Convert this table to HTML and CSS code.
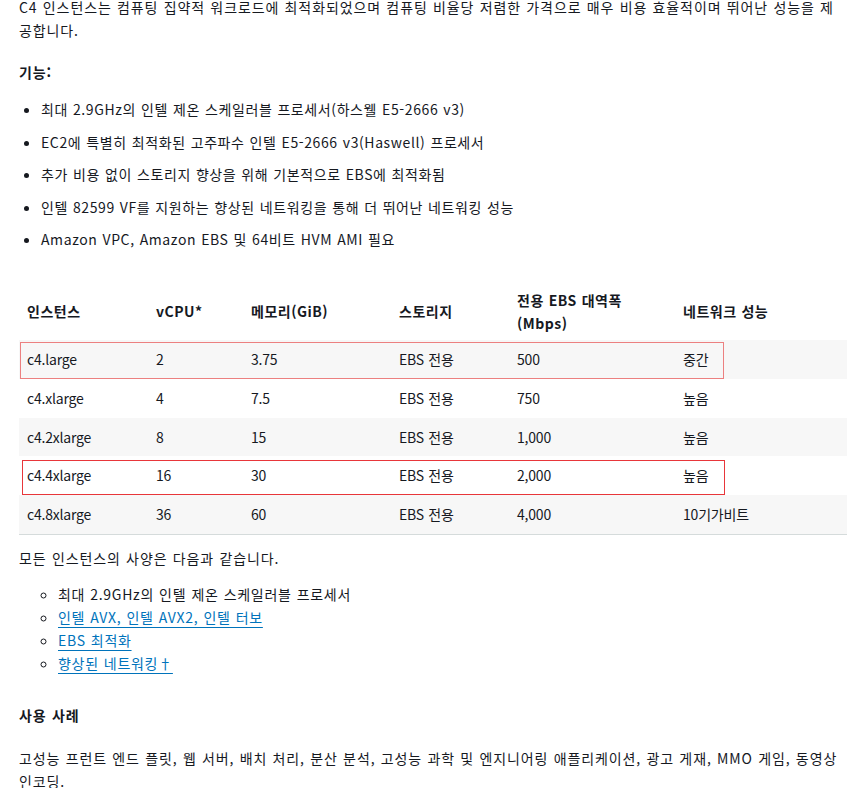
FILE: index.html
```html
<!DOCTYPE html>
<html lang="ko">
<head>
<meta charset="utf-8">
<link rel="stylesheet" href="styles.css">
</head>
<body>
<div class="page">
  <p class="intro">C4 인스턴스는 컴퓨팅 집약적 워크로드에 최적화되었으며 컴퓨팅 비율당 저렴한 가격으로 매우 비용 효율적이며 뛰어난 성능을 제공합니다.</p>
  <h4 class="label">기능:</h4>
  <ul class="features">
    <li>최대 2.9GHz의 인텔 제온 스케일러블 프로세서(하스웰 E5-2666 v3)</li>
    <li>EC2에 특별히 최적화된 고주파수 인텔 E5-2666 v3(Haswell) 프로세서</li>
    <li>추가 비용 없이 스토리지 향상을 위해 기본적으로 EBS에 최적화됨</li>
    <li>인텔 82599 VF를 지원하는 향상된 네트워킹을 통해 더 뛰어난 네트워킹 성능</li>
    <li>Amazon VPC, Amazon EBS 및 64비트 HVM AMI 필요</li>
  </ul>
  <div class="table-wrap">
    <table class="specs">
      <colgroup>
        <col class="c1"><col class="c2"><col class="c3"><col class="c4"><col class="c5"><col class="c6">
      </colgroup>
      <thead>
        <tr><th>인스턴스</th><th>vCPU*</th><th>메모리(GiB)</th><th>스토리지</th><th>전용 EBS 대역폭<br>(Mbps)</th><th>네트워크 성능</th></tr>
      </thead>
      <tbody>
        <tr><td>c4.large</td><td>2</td><td>3.75</td><td>EBS 전용</td><td>500</td><td>중간</td></tr>
        <tr><td>c4.xlarge</td><td>4</td><td>7.5</td><td>EBS 전용</td><td>750</td><td>높음</td></tr>
        <tr><td>c4.2xlarge</td><td>8</td><td>15</td><td>EBS 전용</td><td>1,000</td><td>높음</td></tr>
        <tr><td>c4.4xlarge</td><td>16</td><td>30</td><td>EBS 전용</td><td>2,000</td><td>높음</td></tr>
        <tr><td>c4.8xlarge</td><td>36</td><td>60</td><td>EBS 전용</td><td>4,000</td><td>10기가비트</td></tr>
      </tbody>
    </table>
    <div class="mark mark-1"></div>
    <div class="mark mark-2"></div>
  </div>
  <p class="after">모든 인스턴스의 사양은 다음과 같습니다.</p>
  <ul class="sublist">
    <li>최대 2.9GHz의 인텔 제온 스케일러블 프로세서</li>
    <li><a href="#">인텔 AVX, 인텔 AVX2, 인텔 터보</a></li>
    <li><a href="#">EBS 최적화</a></li>
    <li><a href="#">향상된 네트워킹†</a></li>
  </ul>
  <h4 class="label label-uses">사용 사례</h4>
  <p class="uses">고성능 프런트 엔드 플릿, 웹 서버, 배치 처리, 분산 분석, 고성능 과학 및 엔지니어링 애플리케이션, 광고 게재, MMO 게임, 동영상 인코딩.</p>
</div>
</body>
</html>
```

FILE: styles.css
```css
html, body {
  margin: 0;
  padding: 0;
  background: #ffffff;
}

body {
  font-family: "Noto Sans CJK KR", "Noto Sans", sans-serif;
  font-size: 14px;
  line-height: 22.7px;
  color: #16191f;
  letter-spacing: 0.9px;
  word-spacing: 0.5px;
  overflow: hidden;
}

.page {
  padding: 0 7px 0 19px;
}

p, h4, ul {
  margin: 0;
}

.intro {
  margin-top: -4px;
}

.label {
  font-size: 14px;
  font-weight: 700;
  margin-top: 20px;
}

.features {
  margin-top: 14px;
  padding-left: 22px;
  list-style: disc;
  letter-spacing: 0.6px;
}

.features li + li {
  margin-top: 9.8px;
}

.table-wrap {
  position: relative;
  margin-top: 32px;
}

.specs {
  width: 828px;
  border-collapse: collapse;
  table-layout: fixed;
  border-bottom: 1px solid #d5dbdb;
}

.c1 { width: 129px; }
.c2 { width: 95px; }
.c3 { width: 148px; }
.c4 { width: 118px; }
.c5 { width: 166px; }
.c6 { width: 172px; }

.specs th {
  text-align: left;
  font-weight: 700;
  padding: 6px 8px;
  vertical-align: middle;
  letter-spacing: 0.5px;
}

.specs td {
  padding: 8px 8px;
  height: 22.7px;
  vertical-align: middle;
  letter-spacing: -0.2px;
}

.specs tbody tr:nth-child(odd) {
  background: #f7f7f7;
}

.mark {
  position: absolute;
  pointer-events: none;
  box-sizing: border-box;
}

.mark-1 {
  left: 1px;
  top: 59px;
  width: 704px;
  height: 37px;
  border: 1.5px solid #ec8080;
}

.mark-2 {
  left: 3px;
  top: 177px;
  width: 703px;
  height: 35px;
  border: 1.5px solid #e8363a;
}

.after {
  margin-top: 12px;
}

.sublist {
  margin-top: 14px;
  padding-left: 39px;
  list-style: circle;
  letter-spacing: 0.7px;
}

.sublist a {
  color: #0073bb;
  text-decoration: underline;
  text-underline-offset: 4px;
  text-decoration-thickness: 1px;
}

.label-uses {
  margin-top: 30px;
}

.uses {
  margin-top: 20px;
}
```
